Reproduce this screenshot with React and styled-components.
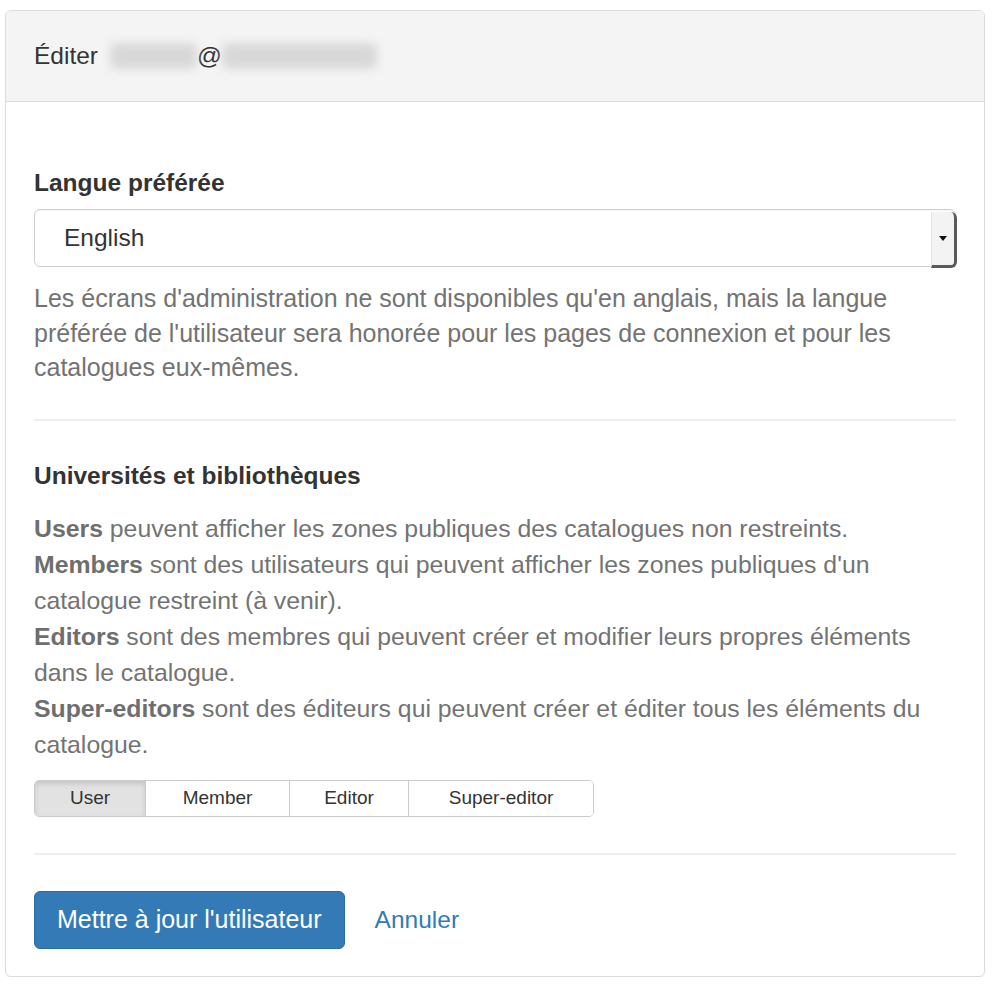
import React from "react";
import styled, { createGlobalStyle } from "styled-components";

const Global = createGlobalStyle`
  html, body { margin: 0; padding: 0; background: #fff; }
  body { font-family: "Liberation Sans", Arial, Helvetica, sans-serif; color: #333; }
  * { box-sizing: border-box; }
`;

const Page = styled.div`
  padding: 10px 14px 0 5px;
  width: 999px;
`;

const Panel = styled.section`
  width: 980px;
  border: 1px solid #dcdcdc;
  border-radius: 6px;
  box-shadow: 0 1px 2px rgba(0, 0, 0, 0.06);
  background: #fff;
  overflow: hidden;
`;

const Header = styled.header`
  height: 91px;
  display: flex;
  align-items: center;
  padding: 0 28px;
  background: #f4f4f4;
  border-bottom: 1px solid #dcdcdc;
  font-size: 24.5px;
  color: #333;
`;

const Blur = styled.span`
  display: inline-block;
  width: ${(p) => p.$w}px;
  margin-left: ${(p) => p.$ml || 0}px;
  height: 26px;
  background: #c9c9c9;
  filter: blur(5px);
  opacity: 0.65;
  border-radius: 6px;
`;

const Body = styled.div`
  padding: 66px 28px 27px;
`;

const Label = styled.div`
  font-size: 24.5px;
  font-weight: bold;
  line-height: 30px;
  color: #333;
  margin-bottom: ${(p) => p.$mb || 11}px;
`;

const Select = styled.div`
  position: relative;
  height: 58px;
  border: 1px solid #cfcfcf;
  border-radius: 6px;
  display: flex;
  align-items: center;
  padding-left: 29px;
  font-size: 24.5px;
  color: #333;
  box-shadow: inset 0 1px 1px rgba(0, 0, 0, 0.04);
`;

const Arrow = styled.div`
  position: absolute;
  right: -2px;
  top: 2px;
  bottom: -2px;
  width: 26px;
  background: #f3f3f3;
  border-left: 1px solid #e3e3e3;
  border-right: 3px solid #5a5a5a;
  border-bottom: 3px solid #5a5a5a;
  border-radius: 0 6px 6px 0;
  display: flex;
  align-items: center;
  justify-content: center;
  &::after {
    content: "";
    border-left: 4px solid transparent;
    border-right: 4px solid transparent;
    border-top: 5px solid #111;
  }
`;

const Help = styled.p`
  margin: 14px 0 0;
  font-size: 25px;
  line-height: 34.5px;
  color: #737373;
`;

const Rule = styled.hr`
  border: 0;
  border-top: 2px solid #eeeeee;
  margin: ${(p) => p.$m};
`;

const Roles = styled.p`
  margin: 0;
  font-size: 24.8px;
  line-height: 36px;
  color: #737373;
  b { font-weight: bold; color: #6e6e6e; }
`;

const Group = styled.div`
  display: inline-flex;
  margin-top: 17px;
  height: 37px;
  border: 1px solid #cccccc;
  border-radius: 5px;
  overflow: hidden;
`;

const Seg = styled.div`
  width: ${(p) => p.$w}px;
  display: flex;
  align-items: center;
  justify-content: center;
  font-size: 19px;
  color: #333;
  background: ${(p) => (p.$active ? "#e2e2e2" : "#fff")};
  box-shadow: ${(p) => (p.$active ? "inset 0 3px 5px rgba(0,0,0,0.125)" : "none")};
  & + & { border-left: 1px solid #cccccc; }
`;

const Actions = styled.div`
  display: flex;
  align-items: center;
  gap: 30px;
`;

const Primary = styled.button`
  height: 58px;
  padding: 0 22px;
  background: #337ab7;
  border: 1px solid #2e6da4;
  border-radius: 6px;
  color: #fff;
  font-family: inherit;
  font-size: 25px;
`;

const LinkBtn = styled.a`
  font-size: 24.5px;
  color: #337ab7;
  text-decoration: none;
`;

export default function App() {
  return (
    <Page>
      <Global />
      <Panel>
        <Header>
          Éditer<Blur $w={87} $ml={12} />@<Blur $w={155} />
        </Header>
        <Body>
          <Label>Langue préférée</Label>
          <Select>
            English
            <Arrow />
          </Select>
          <Help>
            Les écrans d'administration ne sont disponibles qu'en anglais, mais la langue
            préférée de l'utilisateur sera honorée pour les pages de connexion et pour les
            catalogues eux-mêmes.
          </Help>
          <Rule $m="34px 0 40px" />
          <Label $mb={20}>Universités et bibliothèques</Label>
          <Roles>
            <b>Users</b> peuvent afficher les zones publiques des catalogues non restreints.
            <br />
            <b>Members</b> sont des utilisateurs qui peuvent afficher les zones publiques d'un
            catalogue restreint (à venir).
            <br />
            <b>Editors</b> sont des membres qui peuvent créer et modifier leurs propres éléments
            dans le catalogue.
            <br />
            <b>Super-editors</b> sont des éditeurs qui peuvent créer et éditer tous les éléments du
            catalogue.
          </Roles>
          <Group>
            <Seg $w={110} $active>User</Seg>
            <Seg $w={144}>Member</Seg>
            <Seg $w={119}>Editor</Seg>
            <Seg $w={185}>Super-editor</Seg>
          </Group>
          <Rule $m="36px 0 36px" />
          <Actions>
            <Primary>Mettre à jour l'utilisateur</Primary>
            <LinkBtn href="#">Annuler</LinkBtn>
          </Actions>
        </Body>
      </Panel>
    </Page>
  );
}
